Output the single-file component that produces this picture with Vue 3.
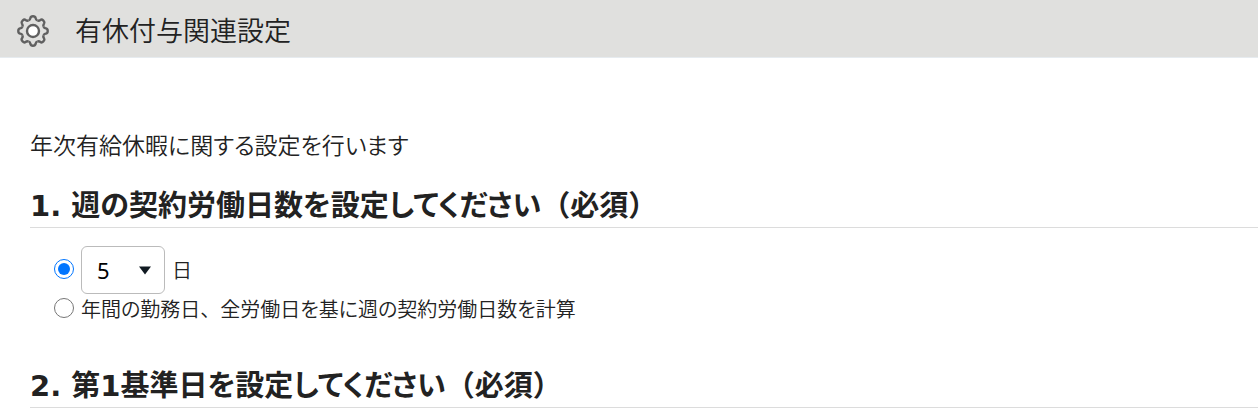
<template>
  <div class="page">
    <header class="header">
      <svg class="gear" viewBox="0 0 32 32" aria-hidden="true">
        <path
          v-for="angle in teeth"
          :key="angle"
          :transform="`rotate(${angle} 16 16)`"
          d="M11.6 5.3 C13.4 4.8 13.2 4.1 13.4 2.9 C13.7 1.5 14.5 1.3 16 1.3 C17.5 1.3 18.3 1.5 18.6 2.9 C18.8 4.1 18.6 4.8 20.4 5.3"
        />
        <circle cx="16" cy="16" r="6" />
      </svg>
      <h1 class="title">有休付与関連設定</h1>
    </header>

    <main class="content">
      <p class="lead">年次有給休暇に関する設定を行います</p>

      <section class="section">
        <h2 class="heading">1. 週の契約労働日数を設定してください<span class="full">（必須）</span></h2>
        <div class="options">
          <div class="option">
            <input id="fixed" v-model="mode" type="radio" name="mode" value="fixed" aria-label="日数を指定" />
            <select id="days" v-model="days" class="select">
              <option v-for="n in 7" :key="n" :value="n">{{ n }}</option>
            </select>
            <label for="days" class="unit">日</label>
          </div>
          <div class="option">
            <input id="calc" v-model="mode" type="radio" name="mode" value="calc" />
            <label for="calc">年間の勤務日<span class="full">、</span>全労働日を基に週の契約労働日数を計算</label>
          </div>
        </div>
      </section>

      <section class="section">
        <h2 class="heading">2. 第1基準日を設定してください<span class="full">（必須）</span></h2>
      </section>
    </main>
  </div>
</template>

<script setup>
import { ref } from 'vue';

const mode = ref('fixed');
const days = ref(5);
const teeth = [0, 45, 90, 135, 180, 225, 270, 315];
</script>

<style>
body {
  background: #fff;
}
</style>

<style scoped>
.page {
  color: #222;
  font-family: "Noto Sans", "Noto Sans CJK JP", sans-serif;
  font-weight: 350;
  font-feature-settings: "palt";
}

.header {
  display: flex;
  align-items: center;
  gap: 26px;
  height: 57px;
  padding: 0 17px;
  background: #e0e0de;
  border-bottom: 1px solid #e6ebef;
}

.gear {
  width: 32px;
  height: 32px;
  margin-top: 4px;
  fill: none;
  stroke: #606060;
  stroke-width: 2.4;
}

.gear circle {
  fill: #fff;
}

.title {
  margin: 4px 0 0;
  font-size: 27px;
  font-weight: 350;
  line-height: 36px;
}

.content {
  padding: 69px 0 8px 30px;
}

.lead {
  margin: 0 0 24px;
  font-size: 23px;
  line-height: 36px;
}

.heading {
  margin: 0;
  padding-bottom: 1px;
  border-bottom: 1px solid #dcdcdc;
  font-family: "DejaVu Sans", "Noto Sans CJK JP", sans-serif;
  font-size: 29px;
  font-weight: 700;
  line-height: 39px;
}

/* 約物は全角幅のまま */
.full {
  font-feature-settings: normal;
}

.options {
  padding: 18px 0 42px 24px;
}

.option {
  display: flex;
  align-items: center;
  gap: 7px;
  font-size: 20px;
  line-height: 31px;
}

.option input {
  width: 20px;
  height: 20px;
  margin: 0 0 3px;
  accent-color: #0075ff;
}

.select {
  width: 84px;
  height: 48px;
  padding: 0 15px;
  border: 1px solid #bbb;
  border-radius: 6px;
  color: #000;
  font: 400 22px "Noto Sans", sans-serif;
  appearance: none;
  background: #fff url("data:image/svg+xml,%3Csvg xmlns='http://www.w3.org/2000/svg' width='14' height='9'%3E%3Cpath d='M1 .5H13L7 8.5Z' fill='%23111a22'/%3E%3C/svg%3E") no-repeat right 12px center;
}
</style>
